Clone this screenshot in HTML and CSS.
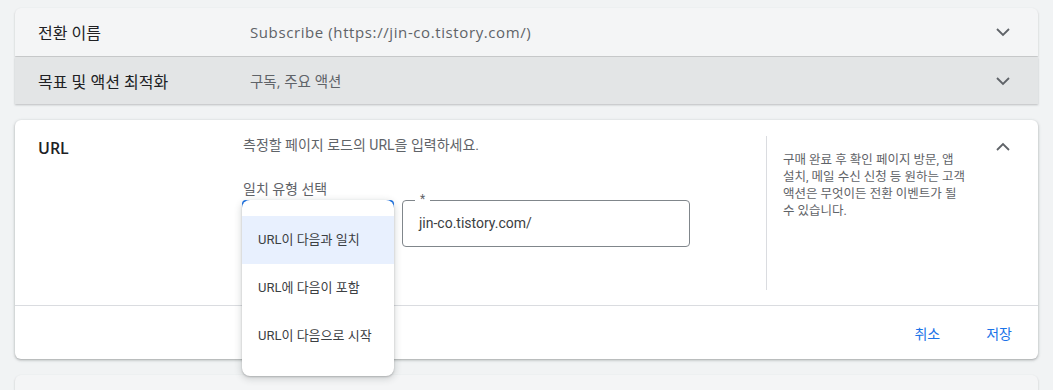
FILE: index.html
```html
<!DOCTYPE html>
<html lang="ko">
<head>
  <meta charset="UTF-8" />
  <title>전환 액션 수정</title>
  <link rel="stylesheet" href="styles.css">
</head>
<body>
<main class="panels">
  <div class="row row-light">
    <span class="row-label">전환 이름</span>
    <span class="row-value wide">Subscribe (https://jin-co.tistory.com/)</span>
    <svg class="chev" viewBox="0 0 24 24"><path d="M6 9l6 6 6-6" /></svg>
  </div>
  <div class="row row-dark">
    <span class="row-label">목표 및 액션 최적화</span>
    <span class="row-value">구독, 주요 액션</span>
    <svg class="chev" viewBox="0 0 24 24"><path d="M6 9l6 6 6-6" /></svg>
  </div>

  <section class="card">
    <div class="card-body">
      <h3 class="card-title">URL</h3>
      <div class="card-main">
        <p class="desc">측정할 페이지 로드의 URL을 입력하세요.</p>
        <p class="sub">일치 유형 선택</p>
        <div class="fields">
          <div class="select-wrap">
            <div class="select-box"></div>
            <ul class="menu">
              <li class="selected">URL이 다음과 일치</li>
              <li>URL에 다음이 포함</li>
              <li>URL이 다음으로 시작</li>
            </ul>
          </div>
          <div class="text-field">
            <span class="notch">*</span>
            jin-co.tistory.com/
          </div>
        </div>
      </div>
      <aside class="help">구매 완료 후 확인 페이지 방문, 앱 설치, 메일 수신 신청 등 원하는 고객 액션은 무엇이든 전환 이벤트가 될 수 있습니다.</aside>
      <svg class="chev up" viewBox="0 0 24 24"><path d="M6 15l6-6 6 6" /></svg>
    </div>
    <div class="card-foot">
      <button class="btn">취소</button>
      <button class="btn">저장</button>
    </div>
  </section>

  <div class="row row-next"></div>
</main>
</body>
</html>
```

FILE: styles.css
```css
* { box-sizing: border-box; margin: 0; padding: 0; }
body {
  font-family: Roboto, 'Noto Sans CJK KR', sans-serif;
  background: #f1f3f4;
  color: #202124;
  padding: 8px 15px 0;
  height: 390px;
  overflow: hidden;
}
.row {
  height: 48px;
  display: flex;
  align-items: center;
  padding: 0 23px;
  box-shadow: 0 1px 2px rgba(60, 64, 67, 0.3);
}
.row-light {
  background: #f4f5f6;
  border-radius: 6px 6px 0 0;
  margin-bottom: 1px;
}
.row-dark {
  background: #e3e5e6;
  height: 47px;
}
.row-label {
  width: 212px;
  font-family: 'Open Sans', 'Noto Sans CJK KR', sans-serif;
  font-size: 16px;
  color: #202124;
}
.row-value {
  flex: 1;
  font-family: 'Open Sans', 'Noto Sans CJK KR', sans-serif;
  font-size: 14.5px;
  color: #5f6368;
}
.row-value.wide {
  font-size: 15px;
  letter-spacing: 0.6px;
}
.chev {
  width: 24px;
  height: 24px;
  fill: none;
  stroke: #5f6368;
  stroke-width: 1.8;
}
.card {
  background: #fff;
  margin-top: 16px;
  border-radius: 6px;
  box-shadow: 0 1px 2px rgba(60, 64, 67, 0.3), 0 1px 3px 1px rgba(60, 64, 67, 0.12);
}
.card-body {
  display: flex;
  padding: 16px 23px 16px 23px;
  border-bottom: 1px solid #dadce0;
  height: 186px;
}
.card-title {
  width: 205px;
  font-family: 'Open Sans', sans-serif;
  font-size: 16px;
  font-weight: 600;
  color: #202124;
  padding-top: 1px;
}
.card-main {
  width: 524px;
  border-right: 1px solid #dadce0;
}
.desc {
  font-size: 14px;
  color: #5f6368;
  line-height: 18px;
}
.sub {
  font-size: 14px;
  color: #5f6368;
  margin-top: 26px;
  line-height: 18px;
}
.fields {
  display: flex;
  gap: 8px;
  margin-top: 2px;
}
.select-wrap {
  position: relative;
  width: 152px;
  height: 48px;
  margin-left: -1px;
}
.select-box {
  height: 48px;
  border: 2px solid #1a73e8;
  border-radius: 4px;
}
.menu {
  position: absolute;
  top: 0;
  left: 0;
  width: 152px;
  list-style: none;
  background: #fff;
  border-radius: 8px;
  padding: 16px 0;
  box-shadow: 0 2px 6px 2px rgba(60, 64, 67, 0.15), 0 1px 2px rgba(60, 64, 67, 0.3);
  z-index: 2;
}
.menu li {
  height: 48px;
  line-height: 48px;
  padding-left: 16px;
  font-size: 13px;
  color: #3c4043;
}
.menu li.selected {
  background: #e8f0fe;
}
.text-field {
  position: relative;
  width: 288px;
  height: 47px;
  border: 1px solid #80868b;
  border-radius: 4px;
  padding-left: 16px;
  line-height: 45px;
  font-size: 14px;
  color: #3c4043;
}
.notch {
  position: absolute;
  top: -9px;
  left: 12px;
  background: #fff;
  padding: 0 5px;
  line-height: 14px;
  font-size: 12px;
  color: #5f6368;
}
.help {
  width: 224px;
  padding: 15px 24px 0 16px;
  font-size: 12.5px;
  line-height: 17px;
  color: #5f6368;
  word-break: keep-all;
}
.help,
.card-main {
  height: 154px;
}
.up {
  margin-top: -1px;
}
.card-foot {
  height: 53px;
  display: flex;
  justify-content: flex-end;
  align-items: center;
  padding-right: 18px;
  gap: 30px;
}
.btn {
  background: none;
  border: none;
  font-family: Roboto, 'Noto Sans CJK KR', sans-serif;
  font-size: 14px;
  color: #1a73e8;
  padding: 8px;
  cursor: pointer;
}
.row-next {
  margin-top: 16px;
  height: 15px;
  background: #f4f5f6;
  border-radius: 6px 6px 0 0;
}
```
